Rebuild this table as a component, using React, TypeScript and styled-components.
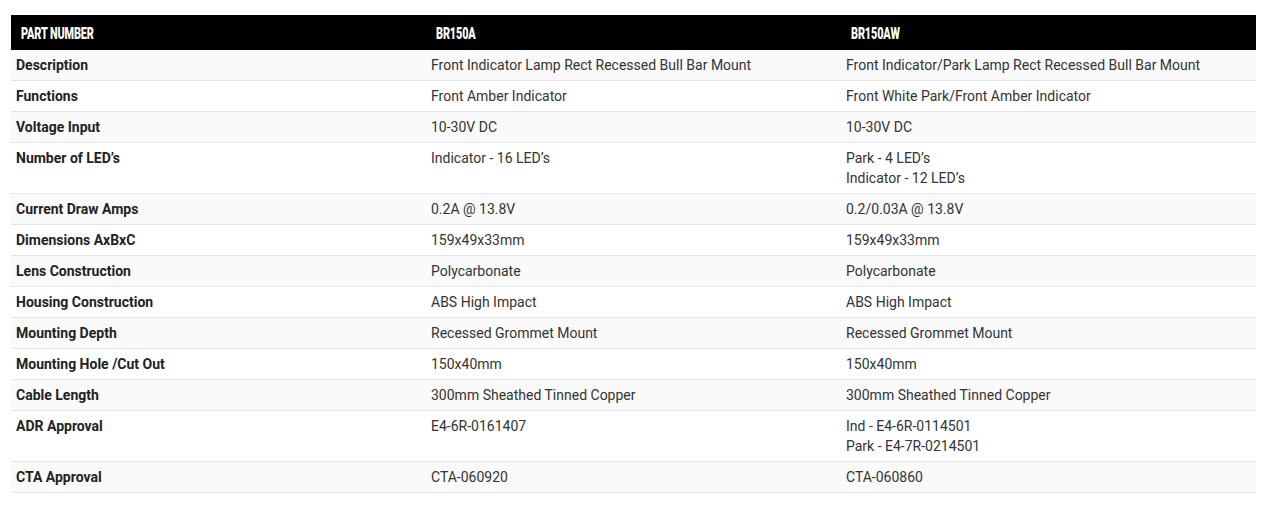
import React from "react";
import styled, { createGlobalStyle } from "styled-components";

const Global = createGlobalStyle`
  html, body { margin: 0; padding: 0; background: #ffffff; }
  body { font-family: Roboto, "Liberation Sans", Arial, sans-serif; }
`;

const Wrap = styled.div`
  padding: 15px 12px 22px 11px;
`;

const Table = styled.table`
  width: 100%;
  border-collapse: collapse;
  table-layout: fixed;
  font-size: 14px;
  line-height: 20px;
  color: #333333;
`;

const HeadCell = styled.th`
  background: #000000;
  color: #ffffff;
  text-align: left;
  height: 35px;
  padding: 3px 10px 0;
  box-sizing: border-box;
  vertical-align: middle;
  white-space: nowrap;
`;

const HeadText = styled.span`
  display: inline-block;
  font-family: Roboto, "Liberation Sans", Arial, sans-serif;
  font-weight: 900;
  font-size: 16px;
  line-height: 16px;
  text-transform: uppercase;
  letter-spacing: -0.2px;
  transform: scaleX(0.68);
  transform-origin: left center;
`;

const Row = styled.tr<{ $shade: boolean }>`
  background: ${(p) => (p.$shade ? "#fafafa" : "#ffffff")};
  border-bottom: 1px solid #e6e6e6;
`;

const Label = styled.td`
  padding: 5px;
  font-weight: 700;
  color: #222222;
  vertical-align: top;
`;

const Cell = styled.td`
  padding: 5px;
  color: #333333;
  vertical-align: top;
`;

const Line = styled.div``;

type Spec = { label: string; a: string[]; b: string[] };

const specs: Spec[] = [
  { label: "Description", a: ["Front Indicator Lamp Rect Recessed Bull Bar Mount"], b: ["Front Indicator/Park Lamp Rect Recessed Bull Bar Mount"] },
  { label: "Functions", a: ["Front Amber Indicator"], b: ["Front White Park/Front Amber Indicator"] },
  { label: "Voltage Input", a: ["10-30V DC"], b: ["10-30V DC"] },
  { label: "Number of LED\u2019s", a: ["Indicator - 16 LED\u2019s"], b: ["Park - 4 LED\u2019s", "Indicator - 12 LED\u2019s"] },
  { label: "Current Draw Amps", a: ["0.2A @ 13.8V"], b: ["0.2/0.03A @ 13.8V"] },
  { label: "Dimensions AxBxC", a: ["159x49x33mm"], b: ["159x49x33mm"] },
  { label: "Lens Construction", a: ["Polycarbonate"], b: ["Polycarbonate"] },
  { label: "Housing Construction", a: ["ABS High Impact"], b: ["ABS High Impact"] },
  { label: "Mounting Depth", a: ["Recessed Grommet Mount"], b: ["Recessed Grommet Mount"] },
  { label: "Mounting Hole /Cut Out", a: ["150x40mm"], b: ["150x40mm"] },
  { label: "Cable Length", a: ["300mm Sheathed Tinned Copper"], b: ["300mm Sheathed Tinned Copper"] },
  { label: "ADR Approval", a: ["E4-6R-0161407"], b: ["Ind - E4-6R-0114501", "Park - E4-7R-0214501"] },
  { label: "CTA Approval", a: ["CTA-060920"], b: ["CTA-060860"] },
];

export default function App() {
  return (
    <>
      <Global />
      <Wrap>
        <Table>
          <thead>
            <tr>
              <HeadCell><HeadText>Part Number</HeadText></HeadCell>
              <HeadCell><HeadText>BR150A</HeadText></HeadCell>
              <HeadCell><HeadText>BR150AW</HeadText></HeadCell>
            </tr>
          </thead>
          <tbody>
            {specs.map((s, i) => (
              <Row key={s.label} $shade={i % 2 === 0}>
                <Label>{s.label}</Label>
                <Cell>
                  {s.a.map((l) => (
                    <Line key={l}>{l}</Line>
                  ))}
                </Cell>
                <Cell>
                  {s.b.map((l) => (
                    <Line key={l}>{l}</Line>
                  ))}
                </Cell>
              </Row>
            ))}
          </tbody>
        </Table>
      </Wrap>
    </>
  );
}
